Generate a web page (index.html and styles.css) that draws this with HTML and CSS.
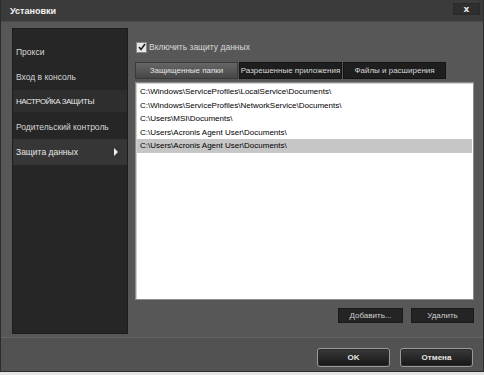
FILE: index.html
```html
<!DOCTYPE html>
<html lang="ru">
<head>
    <meta charset="UTF-8">
    <title>Установки</title>
    <link rel="stylesheet" href="styles.css">
</head>
<body>
    <div class="window">
        <div class="titlebar">
            <span class="title">Установки</span>
            <button class="close">x</button>
        </div>
        <div class="main">
            <div class="sidebar">
                <div class="nav-item">Прокси</div>
                <div class="nav-item">Вход в консоль</div>
                <div class="nav-item section">НАСТРОЙКА ЗАЩИТЫ</div>
                <div class="nav-item">Родительский контроль</div>
                <div class="nav-item active">Защита данных <span class="arrow"></span></div>
            </div>
            <div class="content">
                <label class="check-row">
                    <span class="checkbox">
                        <svg width="8" height="8" viewBox="0 0 8 8"><path d="M1 4 L3 6.5 L7 1" fill="none" stroke="#222" stroke-width="1.6"/></svg>
                    </span>
                    Включить защиту данных
                </label>
                <div class="tabs">
                    <div class="tab selected">Защищенные папки</div>
                    <div class="tab">Разрешенные приложения</div>
                    <div class="tab">Файлы и расширения</div>
                </div>
                <div class="list">
                    <div class="list-row">C:\Windows\ServiceProfiles\LocalService\Documents\</div>
                    <div class="list-row">C:\Windows\ServiceProfiles\NetworkService\Documents\</div>
                    <div class="list-row">C:\Users\MSI\Documents\</div>
                    <div class="list-row">C:\Users\Acronis Agent User\Documents\</div>
                    <div class="list-row picked">C:\Users\Acronis Agent User\Documents\</div>
                </div>
                <div class="list-actions">
                    <button class="flat-btn add">Добавить...</button>
                    <button class="flat-btn remove">Удалить</button>
                </div>
            </div>
        </div>
        <div class="footer">
            <button class="dlg-btn">OK</button>
            <button class="dlg-btn">Отмена</button>
        </div>
    </div>
</body>
</html>
```
FILE: styles.css
```css
body {
    margin: 0;
    background-color: #e6e6e6;
    font-family: "Liberation Sans", Arial, sans-serif;
}
.window {
    width: 484px;
    height: 372px;
    box-sizing: border-box;
    border: 1px solid #2c2c2c;
    border-top: none;
    background-color: #575757;
    display: flex;
    flex-direction: column;
}
.titlebar {
    height: 22px;
    flex: none;
    display: flex;
    align-items: flex-start;
    background-color: #3b3b3b;
    border-bottom: 1px solid #4a4a4a;
    box-sizing: border-box;
}
.title {
    margin: 6px 0 0 9px;
    color: #f2f2f2;
    font-size: 9px;
    font-weight: bold;
}
.close {
    margin: 3px 3px 0 auto;
    width: 27px;
    height: 12px;
    padding: 0;
    border: 1px solid #2a2a2a;
    background-color: #2f2f2f;
    color: #e8e8e8;
    font-family: "DejaVu Sans", sans-serif;
    font-size: 9px;
    font-weight: bold;
    line-height: 9px;
}
.main {
    height: 315px;
    flex: none;
    display: flex;
    gap: 7px;
    padding: 6px 9px 3px 11px;
    box-sizing: border-box;
}
.sidebar {
    width: 116px;
    flex: none;
    box-sizing: border-box;
    padding-top: 10px;
    background-color: #262626;
    border: 1px solid #1c1c1c;
}
.nav-item {
    height: 25px;
    display: flex;
    align-items: center;
    padding: 0 4px 0 3px;
    color: #d6d6d6;
    font-size: 8.5px;
}
.nav-item.section {
    height: 22px;
    margin: 1px 0 2px;
    background-color: #2e2e2e;
    color: #e8e8e8;
    font-size: 8px;
    letter-spacing: -0.5px;
}
.nav-item.active {
    height: 26px;
    background-color: #363636;
    color: #e6e6e6;
}
.arrow {
    margin-left: auto;
    margin-right: 5px;
    width: 0;
    height: 0;
    border-top: 4px solid transparent;
    border-bottom: 4px solid transparent;
    border-left: 4px solid #f0f0f0;
}
.content {
    flex: 1;
    display: flex;
    flex-direction: column;
}
.check-row {
    display: flex;
    align-items: center;
    gap: 2px;
    height: 14px;
    margin: 12px 0 0 1px;
    color: #dadada;
    font-size: 8.5px;
}
.checkbox {
    width: 9px;
    height: 9px;
    background-color: #e8e8e8;
    border: 1px solid #888;
    display: flex;
    align-items: center;
    justify-content: center;
}
.tabs {
    display: flex;
    gap: 1px;
    margin-top: 8px;
    height: 17px;
}
.tab {
    width: 103px;
    display: flex;
    align-items: center;
    justify-content: center;
    background-color: #1e1e1e;
    border: 1px solid #141414;
    box-sizing: border-box;
    color: #d8d8d8;
    font-size: 8px;
}
.tab.selected {
    background: linear-gradient(#666, #474747);
    border-color: #3a3a3a;
    color: #e4e4e4;
}
.list {
    flex: 1;
    margin-top: 3px;
    padding: 2px 1px;
    background-color: #fff;
    border: 1px solid #8c8c8c;
    box-shadow: inset 1px 1px 0 #cfcfcf;
}
.list-row {
    height: 13.5px;
    line-height: 13.5px;
    padding-left: 3px;
    color: #000;
    font-size: 8px;
    white-space: nowrap;
}
.list-row.picked {
    background-color: #c6c6c6;
}
.list-actions {
    display: flex;
    justify-content: flex-end;
    gap: 8px;
    margin: 8px 0 11px;
}
.flat-btn {
    height: 15px;
    padding: 0;
    background-color: #242424;
    border: 1px solid #1a1a1a;
    color: #d0d0d0;
    font-family: "Liberation Sans", Arial, sans-serif;
    font-size: 8px;
}
.flat-btn.add {
    width: 65px;
}
.flat-btn.remove {
    width: 63px;
}
.footer {
    flex: 1;
    display: flex;
    justify-content: flex-end;
    align-items: flex-start;
    gap: 10px;
    padding: 10px 10px 0 0;
    background-color: #525252;
    border-top: 1px solid #646464;
}
.dlg-btn {
    width: 73px;
    height: 19px;
    padding: 0;
    border: 1px solid #9a9a9a;
    border-radius: 3px;
    background: linear-gradient(#3a3a3a, #161616);
    box-shadow: inset 0 0 0 1px #2a2a2a;
    color: #e6e6e6;
    font-family: "Liberation Sans", Arial, sans-serif;
    font-size: 8px;
    font-weight: bold;
}
```
